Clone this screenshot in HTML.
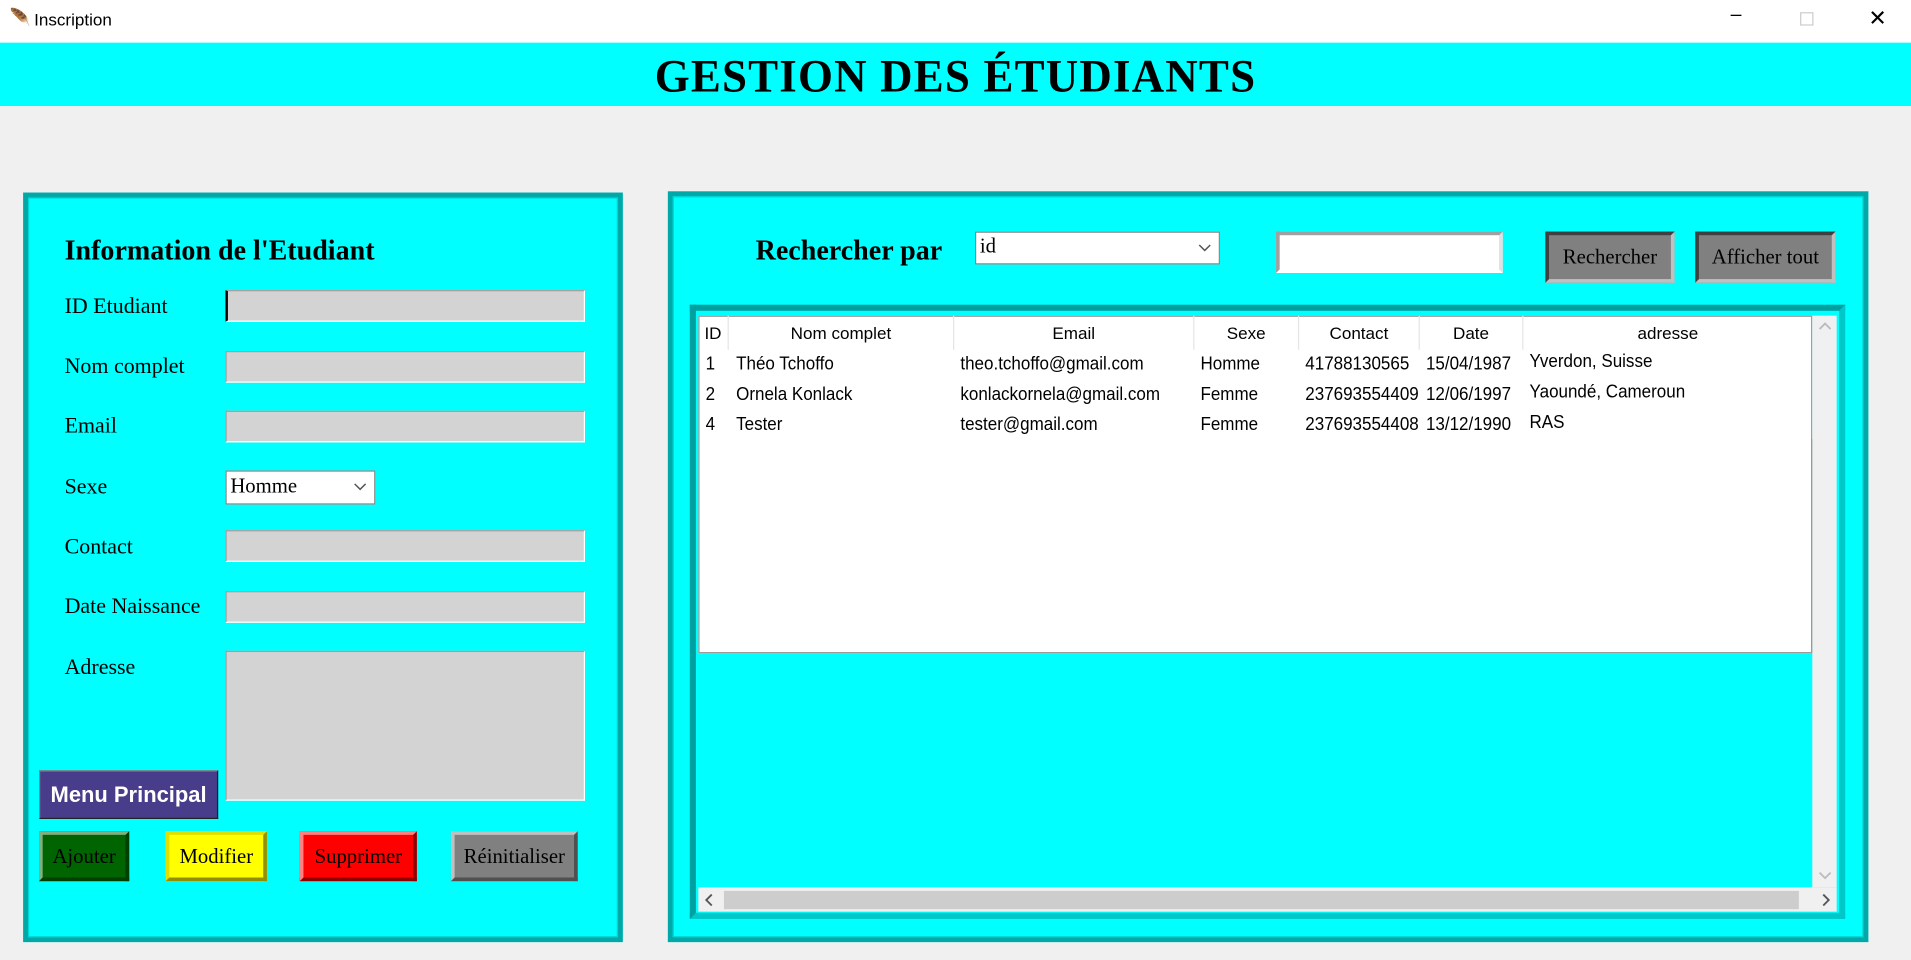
<!DOCTYPE html>
<html><head><meta charset="utf-8"><style>
*{margin:0;padding:0;box-sizing:border-box}
html,body{width:1911px;height:960px;overflow:hidden;background:#f0f0f0}
#w{position:absolute;left:0;top:0;width:1568px;height:788px;transform:scale(1.21875);transform-origin:0 0;font-family:"Liberation Serif",serif}
.a{position:absolute}
.panel{background:#00ffff;border:4px solid #00a8a8;box-shadow:inset 0 0 0 1px #00d8d8}
.lbl{font-size:18px;color:#000}
.ent{background:#d3d3d3;border:1px solid #fff;border-top-color:#a0a0a0;border-left-color:#a0a0a0}
.btn{font-size:17px;text-align:center;border:3px solid;display:flex;align-items:center;justify-content:center}
.sans{font-family:"Liberation Sans",sans-serif}
.th{position:absolute;top:0;height:28px;line-height:28px;font-size:14px;text-align:center;border-right:1px solid #e5e5e5}
.td{position:absolute;font-size:15px;white-space:nowrap;transform:scaleX(0.93);transform-origin:0 0}
.chev{position:absolute;right:6px;top:9px}
</style></head><body><div id="w">
<div class="a" style="left:0;top:0;width:1568px;height:35px;background:#fff"></div>
<div class="a sans" style="left:8px;top:6px;font-size:14px">🪶</div>
<div class="a sans" style="left:28px;top:8px;font-size:14px">Inscription</div>
<div class="a sans" style="left:1420px;top:4px;font-size:16px">–</div>
<div class="a" style="left:1477px;top:10px;width:11px;height:11px;border:1px solid #ccc"></div>
<div class="a sans" style="left:1533px;top:5px;font-size:18px;font-weight:300">✕</div>
<div class="a" style="left:0;top:35px;width:1568px;height:52px;background:#00ffff"></div>
<div class="a" style="left:0;top:41px;width:1568px;text-align:center;font-size:38px;font-weight:bold;letter-spacing:1px;transform:scaleX(0.97)">GESTION DES ÉTUDIANTS</div>

<div class="a panel" style="left:19px;top:158px;width:492px;height:615px"></div>
<div class="a" style="left:53px;top:193px;font-size:23px;font-weight:bold">Information de l'Etudiant</div>
<div class="a lbl" style="left:53px;top:241px">ID Etudiant</div>
<div class="a ent" style="left:185px;top:238px;width:295px;height:26px;border-left:2px solid #000"></div>
<div class="a lbl" style="left:53px;top:290px">Nom complet</div>
<div class="a ent" style="left:185px;top:288px;width:295px;height:26px"></div>
<div class="a lbl" style="left:53px;top:339px">Email</div>
<div class="a ent" style="left:185px;top:337px;width:295px;height:26px"></div>
<div class="a lbl" style="left:53px;top:389px">Sexe</div>
<div class="a" style="left:185px;top:386px;width:123px;height:28px;background:#fff;border:1px solid #888;font-size:17px;padding:2px 3px">Homme<svg class="chev" width="11" height="7"><path d="M1 1L5.5 5.5L10 1" fill="none" stroke="#555" stroke-width="1.2"/></svg></div>
<div class="a lbl" style="left:53px;top:438px">Contact</div>
<div class="a ent" style="left:185px;top:435px;width:295px;height:26px"></div>
<div class="a lbl" style="left:53px;top:487px">Date Naissance</div>
<div class="a ent" style="left:185px;top:485px;width:295px;height:26px"></div>
<div class="a lbl" style="left:53px;top:537px">Adresse</div>
<div class="a ent" style="left:185px;top:534px;width:295px;height:123px"></div>
<div class="a sans" style="left:32px;top:632px;width:147px;height:40px;background:#483d8b;color:#fff;font-weight:bold;font-size:18px;text-align:center;line-height:38px;border:1px solid #222;border-top-color:#888;border-left-color:#888">Menu Principal</div>
<div class="a btn" style="left:32px;top:682px;width:74px;height:41px;background:#006400;border-color:#7fb07f #004000 #004000 #7fb07f">Ajouter</div>
<div class="a btn" style="left:136px;top:682px;width:83px;height:41px;background:#ffff00;border-color:#e0e000 #909000 #909000 #e0e000">Modifier</div>
<div class="a btn" style="left:246px;top:682px;width:96px;height:41px;background:#ff0000;border-color:#ff8080 #900000 #900000 #ff8080">Supprimer</div>
<div class="a btn" style="left:370px;top:682px;width:104px;height:41px;background:#808080;border-color:#c0c0c0 #505050 #505050 #c0c0c0">Réinitialiser</div>

<div class="a panel" style="left:548px;top:157px;width:985px;height:616px"></div>
<div class="a" style="left:620px;top:193px;font-size:23px;font-weight:bold">Rechercher par</div>
<div class="a" style="left:800px;top:190px;width:201px;height:27px;background:#fff;border:1px solid #888;font-size:17px;padding:1px 3px">id<svg class="chev" width="11" height="7"><path d="M1 1L5.5 5.5L10 1" fill="none" stroke="#555" stroke-width="1.2"/></svg></div>
<div class="a" style="left:1047px;top:190px;width:186px;height:34px;background:#fff;border:3px solid #a0a0a0;border-right-color:#e0e0e0;border-bottom-color:#fff"></div>
<div class="a btn" style="left:1268px;top:190px;width:106px;height:42px;background:#808080;border-color:#404040 #c0c0c0 #c0c0c0 #404040">Rechercher</div>
<div class="a btn" style="left:1391px;top:190px;width:115px;height:42px;background:#808080;border-color:#404040 #c0c0c0 #c0c0c0 #404040">Afficher tout</div>

<div class="a" style="left:566px;top:250px;width:948px;height:504px;border:5px solid #00b0b0;border-color:#00a0a0 #00c8c8 #00c8c8 #00a0a0"></div>
<div class="a" style="left:573px;top:259px;width:914px;height:277px;background:#fff;border:1px solid #999"></div>
<div class="a sans" style="left:573px;top:259px;width:914px;height:28px">
<div class="th" style="left:0;width:25px">ID</div>
<div class="th" style="left:25px;width:185px">Nom complet</div>
<div class="th" style="left:210px;width:197px">Email</div>
<div class="th" style="left:407px;width:86px">Sexe</div>
<div class="th" style="left:493px;width:99px">Contact</div>
<div class="th" style="left:592px;width:85px">Date</div>
<div class="th" style="left:677px;width:237px;border:0">adresse</div>
</div>
<div class="a sans" style="left:573px;top:290px">
<div class="td" style="left:6px;top:0">1</div><div class="td" style="left:31px;top:0">Théo Tchoffo</div><div class="td" style="left:215px;top:0">theo.tchoffo@gmail.com</div><div class="td" style="left:412px;top:0">Homme</div><div class="td" style="left:498px;top:0">41788130565</div><div class="td" style="left:597px;top:0">15/04/1987</div><div class="td" style="left:682px;top:-2px">Yverdon, Suisse</div>
<div class="td" style="left:6px;top:25px">2</div><div class="td" style="left:31px;top:25px">Ornela Konlack</div><div class="td" style="left:215px;top:25px">konlackornela@gmail.com</div><div class="td" style="left:412px;top:25px">Femme</div><div class="td" style="left:498px;top:25px">237693554409</div><div class="td" style="left:597px;top:25px">12/06/1997</div><div class="td" style="left:682px;top:23px">Yaoundé, Cameroun</div>
<div class="td" style="left:6px;top:50px">4</div><div class="td" style="left:31px;top:50px">Tester</div><div class="td" style="left:215px;top:50px">tester@gmail.com</div><div class="td" style="left:412px;top:50px">Femme</div><div class="td" style="left:498px;top:50px">237693554408</div><div class="td" style="left:597px;top:50px">13/12/1990</div><div class="td" style="left:682px;top:48px">RAS</div>
</div>
<div class="a" style="left:1487px;top:259px;width:20px;height:469px;background:#f0f0f0"></div>
<div class="a" style="left:1486px;top:360px;width:1px;height:176px;background:#999"></div>
<svg class="a" style="left:1492px;top:264px" width="11" height="8"><path d="M1 6L5.5 1.5L10 6" fill="none" stroke="#bbb" stroke-width="1.5"/></svg>
<svg class="a" style="left:1492px;top:714px" width="11" height="8"><path d="M1 2L5.5 6.5L10 2" fill="none" stroke="#bbb" stroke-width="1.5"/></svg>
<div class="a" style="left:573px;top:728px;width:934px;height:20px;background:#f0f0f0"></div>
<div class="a" style="left:594px;top:731px;width:882px;height:15px;background:#cdcdcd"></div>
<svg class="a" style="left:578px;top:733px" width="8" height="11"><path d="M6 1L1.5 5.5L6 10" fill="none" stroke="#555" stroke-width="1.5"/></svg>
<svg class="a" style="left:1494px;top:733px" width="8" height="11"><path d="M2 1L6.5 5.5L2 10" fill="none" stroke="#555" stroke-width="1.5"/></svg>
</div></body></html>
